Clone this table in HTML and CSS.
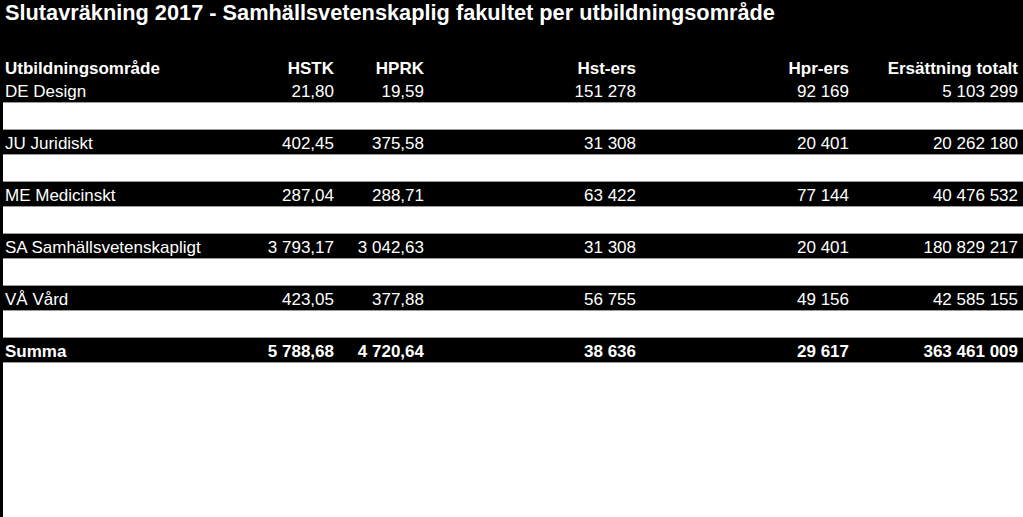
FILE: index.html
```html
<!DOCTYPE html>
<html lang="sv">
<head>
<meta charset="utf-8">
<title>Slutavräkning 2017</title>
<link rel="stylesheet" href="styles.css">
</head>
<body>
<div class="page">
  <h1 class="title">Slutavräkning 2017 - Samhällsvetenskaplig fakultet per utbildningsområde</h1>
  <div class="table">
    <div class="row head">
      <div class="c">Utbildningsområde</div><div class="n">HSTK</div><div class="n">HPRK</div><div class="n">Hst-ers</div><div class="n">Hpr-ers</div><div class="n">Ersättning totalt</div>
    </div>
    <div class="row">
      <div class="c">DE Design</div><div class="n">21,80</div><div class="n">19,59</div><div class="n">151 278</div><div class="n">92 169</div><div class="n">5 103 299</div>
    </div>
    <div class="gap"></div>
    <div class="row">
      <div class="c">JU Juridiskt</div><div class="n">402,45</div><div class="n">375,58</div><div class="n">31 308</div><div class="n">20 401</div><div class="n">20 262 180</div>
    </div>
    <div class="gap"></div>
    <div class="row">
      <div class="c">ME Medicinskt</div><div class="n">287,04</div><div class="n">288,71</div><div class="n">63 422</div><div class="n">77 144</div><div class="n">40 476 532</div>
    </div>
    <div class="gap"></div>
    <div class="row">
      <div class="c">SA Samhällsvetenskapligt</div><div class="n">3 793,17</div><div class="n">3 042,63</div><div class="n">31 308</div><div class="n">20 401</div><div class="n">180 829 217</div>
    </div>
    <div class="gap"></div>
    <div class="row">
      <div class="c">VÅ Vård</div><div class="n">423,05</div><div class="n">377,88</div><div class="n">56 755</div><div class="n">49 156</div><div class="n">42 585 155</div>
    </div>
    <div class="gap"></div>
    <div class="row sum">
      <div class="c">Summa</div><div class="n">5 788,68</div><div class="n">4 720,64</div><div class="n">38 636</div><div class="n">29 617</div><div class="n">363 461 009</div>
    </div>
    <div class="rest"></div>
  </div>
</div>
</body>
</html>
```
FILE: styles.css
```css
html, body {
  margin: 0;
  padding: 0;
  background: #000;
}
.page {
  width: 1023px;
  height: 517px;
  overflow: hidden;
  background: #000;
  color: #fff;
  font-family: "Liberation Sans", Arial, sans-serif;
  display: flex;
  flex-direction: column;
}
.title {
  margin: 0 0 28px 0;
  padding-left: 5px;
  height: 26px;
  font-size: 21.75px;
  line-height: 26px;
  font-weight: bold;
  white-space: nowrap;
}
.table {
  display: flex;
  flex-direction: column;
  flex: 1;
}
.row {
  display: grid;
  grid-template-columns: 245px 84px 90px 212px 213px 169px;
  box-sizing: border-box;
  padding: 4px 5px 0 5px;
  height: 24px;
  font-size: 17px;
  line-height: 20px;
  white-space: nowrap;
}
.head {
  padding-top: 5px;
}
.head, .sum {
  font-weight: bold;
}
.n {
  text-align: right;
}
.gap {
  height: 28px;
  margin-left: 3px;
  background: #fff;
  box-sizing: border-box;
  border-top: 1px solid #9a9a9a;
  border-bottom: 1px solid #9a9a9a;
}
.rest {
  flex: 1;
  margin-left: 3px;
  background: #fff;
  border-top: 1px solid #9a9a9a;
}
```
